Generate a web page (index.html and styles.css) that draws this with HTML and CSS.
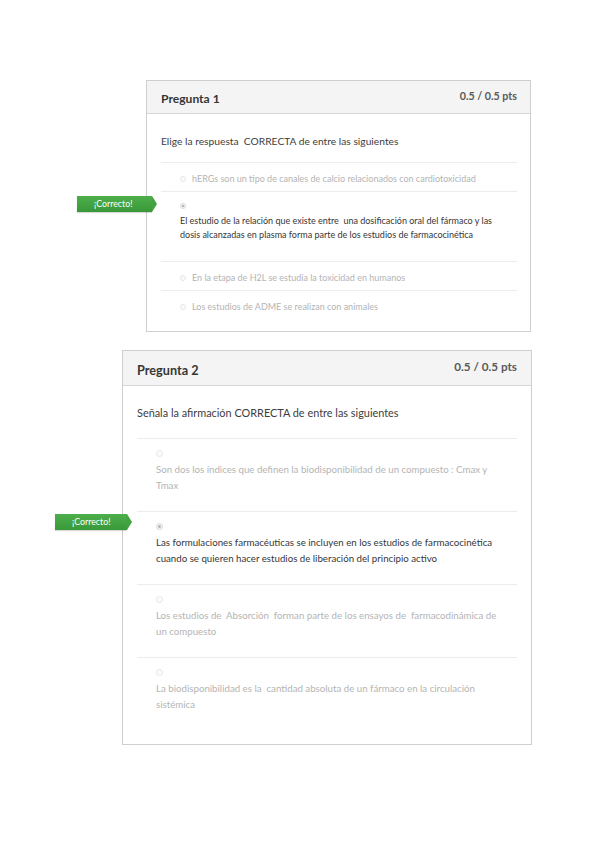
FILE: index.html
```html
<!DOCTYPE html>
<html lang="es">
<head>
<meta charset="utf-8">
<title>Preguntas</title>
<link rel="stylesheet" href="styles.css">
</head>
<body>
<div class="page">
  <section class="card card-1">
    <header class="card-head">
      <h2 class="title">Pregunta 1</h2>
      <span class="pts">0.5 / 0.5 pts</span>
    </header>
    <div class="card-body">
      <p class="question">Elige la respuesta &nbsp;CORRECTA de entre las siguientes</p>
      <div class="answers">
        <div class="answer inline faded"><span class="radio"></span><span class="text">hERGs son un tipo de canales de calcio relacionados con cardiotoxicidad</span></div>
        <div class="answer block selected">
          <span class="tag">¡Correcto!</span>
          <span class="radio checked"></span>
          <p class="text">El estudio de la relación que existe entre &nbsp;una dosificación oral del fármaco y las<br>dosis alcanzadas en plasma forma parte de los estudios de farmacocinética</p>
        </div>
        <div class="answer inline faded"><span class="radio"></span><span class="text">En la etapa de H2L se estudia la toxicidad en humanos</span></div>
        <div class="answer inline faded last"><span class="radio"></span><span class="text">Los estudios de ADME se realizan con animales</span></div>
      </div>
    </div>
  </section>

  <section class="card card-2">
    <header class="card-head">
      <h2 class="title">Pregunta 2</h2>
      <span class="pts">0.5 / 0.5 pts</span>
    </header>
    <div class="card-body">
      <p class="question">Señala la afirmación CORRECTA de entre las siguientes</p>
      <div class="answers">
        <div class="answer block faded">
          <span class="radio"></span>
          <p class="text">Son dos los índices que definen la biodisponibilidad de un compuesto : Cmax y<br>Tmax</p>
        </div>
        <div class="answer block selected">
          <span class="tag">¡Correcto!</span>
          <span class="radio checked"></span>
          <p class="text">Las formulaciones farmacéuticas se incluyen en los estudios de farmacocinética<br>cuando se quieren hacer estudios de liberación del principio activo</p>
        </div>
        <div class="answer block faded">
          <span class="radio"></span>
          <p class="text">Los estudios de &nbsp;Absorción &nbsp;forman parte de los ensayos de &nbsp;farmacodinámica de<br>un compuesto</p>
        </div>
        <div class="answer block faded">
          <span class="radio"></span>
          <p class="text">La biodisponibilidad es la &nbsp;cantidad absoluta de un fármaco en la circulación<br>sistémica</p>
        </div>
      </div>
    </div>
  </section>
</div>
</body>
</html>
```

FILE: styles.css
```css
* { box-sizing: border-box; }

html, body {
  margin: 0;
  padding: 0;
  background: #ffffff;
}

body {
  font-family: Lato, "Open Sans", "Liberation Sans", sans-serif;
  color: #3a3a3a;
}

.page {
  display: flex;
  flex-direction: column;
  align-items: flex-start;
  padding-top: 80px;
}

.card {
  border: 1px solid #cfcfcf;
  background: #ffffff;
}

.card-head {
  display: flex;
  justify-content: space-between;
  align-items: flex-start;
  background: #f4f4f4;
  border-bottom: 1px solid #d6d6d6;
}

.title {
  margin: 0;
  font-weight: 700;
  color: #363636;
}

.pts {
  font-weight: 700;
  color: #5a5a5a;
}

.question {
  margin: 0;
  color: #3d3d3d;
}

.answer {
  position: relative;
  border-top: 1px solid #ececec;
}

.radio {
  display: block;
  flex: none;
  border-radius: 50%;
  border: 1px solid #e6e6e6;
  background: #fbfbfb;
}

.radio.checked {
  border-color: #d8d8d8;
  background: radial-gradient(circle, #b5b5b5 0 1.2px, #f6f6f6 1.6px);
}

.text { margin: 0; }

.faded .text { color: #b4b4b4; }
.selected .text { color: #363636; }

.tag {
  position: absolute;
  display: block;
  height: 16px;
  line-height: 16px;
  padding-left: 17px;
  font-size: 8.8px;
  color: #ffffff;
  background: linear-gradient(#4daf4a, #39993a);
  box-shadow: 0 1px 1px rgba(0,0,0,0.15);
}

.tag::after {
  content: "";
  position: absolute;
  top: 0;
  right: -5px;
  border-top: 8px solid transparent;
  border-bottom: 8px solid transparent;
  border-left: 5px solid #42a340;
}

/* ---- Card 1 ---- */
.card-1 {
  margin-left: 146px;
  width: 385px;
}

.card-1 .card-head {
  height: 33px;
  padding: 0 13px 0 14px;
}

.card-1 .title {
  font-size: 12.1px;
  line-height: 14px;
  padding-top: 11px;
}

.card-1 .pts {
  font-size: 10.7px;
  line-height: 12px;
  padding-top: 9px;
}

.card-1 .card-body {
  padding: 0 13px 17px 14px;
}

.card-1 .question {
  font-size: 10.25px;
  line-height: 14px;
  padding: 20px 0 14px;
}

.card-1 .answer.inline {
  display: flex;
  align-items: center;
  gap: 6px;
  padding: 9px 0 5px 19px;
  font-size: 9px;
  line-height: 14px;
}

.card-1 .answer.last { padding-bottom: 0; }

.card-1 .radio {
  width: 6px;
  height: 6px;
}

.card-1 .answer.block {
  padding: 11px 0 19px 19px;
  font-size: 9px;
  line-height: 14px;
}

.card-1 .answer.block .text { margin-top: 5px; }

.card-1 .tag {
  left: -84px;
  top: 4px;
  width: 75px;
}

/* ---- Card 2 ---- */
.card-2 {
  margin-top: 18px;
  margin-left: 122px;
  width: 410px;
}

.card-2 .card-head {
  height: 35px;
  padding: 0 14px 0 14px;
}

.card-2 .title {
  font-size: 12.7px;
  line-height: 15px;
  padding-top: 12px;
}

.card-2 .pts {
  font-size: 11.7px;
  line-height: 13px;
  padding-top: 9px;
}

.card-2 .card-body {
  padding: 0 14px 14px 14px;
}

.card-2 .question {
  font-size: 10.9px;
  line-height: 15px;
  padding: 19px 0 18px;
}

.card-2 .answer.block {
  padding: 11px 0 18px 19px;
  font-size: 9.7px;
  line-height: 16px;
}

.card-2 .radio {
  width: 7px;
  height: 7px;
}

.card-2 .answer.block .text { margin-top: 4px; }

.card-2 .tag {
  left: -82px;
  top: 2px;
  width: 72px;
}
```
